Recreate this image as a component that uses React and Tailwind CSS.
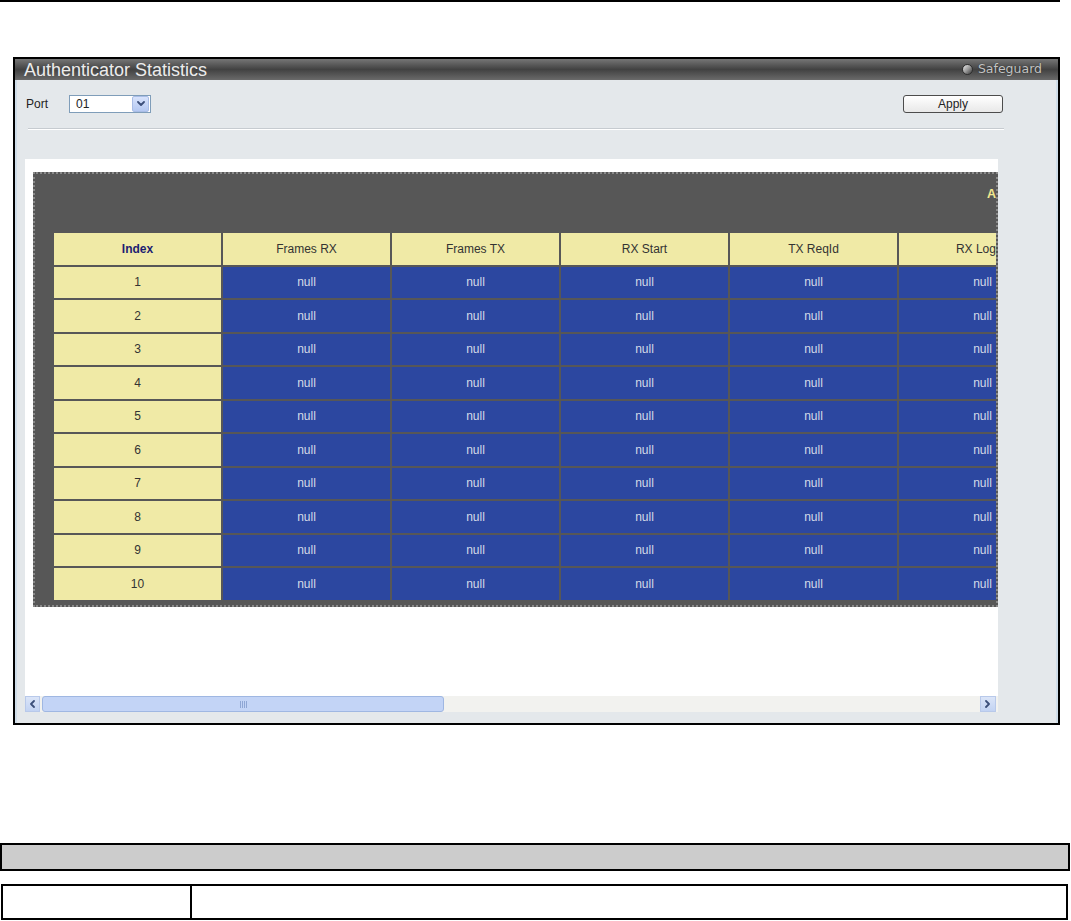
import React from "react";

const cols = ["Frames RX", "Frames TX", "RX Start", "TX ReqId", "RX Logoff"];
const rows = Array.from({ length: 10 }, (_, i) => i + 1);

function Chevron({ dir = "down", className = "" }) {
  const d = dir === "down" ? "M1 2 L4 5 L7 2" : dir === "left" ? "M5 1 L2 4 L5 7" : "M2 1 L5 4 L2 7";
  return (
    <svg width="8" height="8" viewBox="0 0 8 8" className={className}>
      <path d={d} fill="none" stroke="#3c4f7a" strokeWidth="1.8" strokeLinecap="round" strokeLinejoin="round" />
    </svg>
  );
}

export default function App() {
  return (
    <div className="relative w-[1071px] h-[921px] bg-white overflow-hidden" style={{ fontFamily: '"Liberation Sans", Arial, sans-serif' }}>
      <div className="h-[2px] w-[1060px] bg-black" />

      {/* Frame */}
      <div className="ml-[13px] mt-[55px] w-[1047px] h-[668px] border-2 border-black flex flex-col bg-[#e4e8eb]">
        {/* Title bar */}
        <div className="h-[21px] flex items-center justify-between bg-gradient-to-b from-[#767676] via-[#424242] to-[#6a6a6a]">
          <span className="pl-[9px] text-[18px] leading-none text-[#ececec]">Authenticator Statistics</span>
          <div className="flex items-center gap-[5px] pr-[16px]">
            <span className="w-[11px] h-[11px] rounded-full bg-gradient-to-br from-[#f0f0f0] via-[#9a9a9a] to-[#3a3a3a] border border-[#2e2e2e]" />
            <span className="text-[12.5px] leading-none text-[#c4c4c4]" style={{ fontFamily: '"DejaVu Sans", sans-serif', textShadow: "0 0 1px #222" }}>Safeguard</span>
          </div>
        </div>

        {/* Body */}
        <div className="flex-1 border-l-2 border-r-2 border-[#cfdde9] pl-[8px]">
          <div className="mt-[14px] w-[978px] h-[19px] flex items-center justify-between">
            <div className="flex items-center">
              <span className="ml-[1px] text-[12px] text-[#222]">Port</span>
              <div className="ml-[21px] w-[82px] h-[18px] border border-[#7f9db9] bg-white flex items-center justify-between">
                <span className="pl-[6px] text-[12px] text-[#222]">01</span>
                <span className="w-[17px] h-[16px] mr-[1px] bg-gradient-to-b from-[#d8e3fc] to-[#b4c8f2] border border-[#a9bde6] flex items-center justify-center rounded-[2px]">
                  <Chevron dir="down" />
                </span>
              </div>
            </div>
            <button className="w-[100px] h-[18px] border border-[#4c4c4c] rounded-[3px] bg-gradient-to-b from-white to-[#e8e8e8] text-[12px] text-[#222] leading-none">
              Apply
            </button>
          </div>

          <div className="mt-[15px] ml-[3px] w-[976px] h-[2px] border-t border-[#c6cbd0] border-b border-b-white" />

          {/* White content area */}
          <div className="mt-[29px] w-[973px] h-[553px] bg-white flex flex-col">
            <div className="ml-[8px] mt-[13px] w-[965px] h-[435px] bg-[#575757] border-2 border-dotted border-[#8a8a8a] overflow-hidden">
              <div className="h-[59px] pl-[952px] pt-[11px] whitespace-nowrap text-[12.5px] font-bold text-[#f2e88e]">
                Authenticator Statistics
              </div>
              <div className="ml-[19px] grid grid-cols-[repeat(6,167px)] gap-[2px] text-[12px]">
                <div className="h-[31.5px] bg-[#f0eaa6] flex items-center justify-center font-bold text-[#1e1e72]">Index</div>
                {cols.map((c) => (
                  <div key={c} className="h-[31.5px] bg-[#f0eaa6] flex items-center justify-center text-[#333] whitespace-nowrap">{c}</div>
                ))}
                {rows.map((r) => (
                  <React.Fragment key={r}>
                    <div className="h-[31.5px] bg-[#f0eaa6] flex items-center justify-center text-[#333]">{r}</div>
                    {cols.map((c) => (
                      <div key={c} className="h-[31.5px] bg-[#2c47a0] flex items-center justify-center text-[#d4dae8]">null</div>
                    ))}
                  </React.Fragment>
                ))}
              </div>
            </div>
            <div className="flex-1" />
            {/* Scrollbar */}
            <div className="h-[16px] flex items-stretch bg-[#f2f2ef]">
              <div className="w-[15px] bg-gradient-to-b from-[#dbe5f8] to-[#c2d3f3] border border-[#b8c9ea] flex items-center justify-center">
                <Chevron dir="left" />
              </div>
              <div className="ml-[2px] w-[402px] rounded-[3px] bg-[#c3d4f6] border border-[#9fb7e2] flex items-center justify-center gap-[1px]">
                <span className="w-[1px] h-[7px] bg-[#8ea6d4]" />
                <span className="w-[1px] h-[7px] bg-[#8ea6d4]" />
                <span className="w-[1px] h-[7px] bg-[#8ea6d4]" />
                <span className="w-[1px] h-[7px] bg-[#8ea6d4]" />
              </div>
              <div className="flex-1" />
              <div className="w-[16px] mr-[2px] bg-gradient-to-b from-[#dbe5f8] to-[#c2d3f3] border border-[#b8c9ea] flex items-center justify-center">
                <Chevron dir="right" />
              </div>
            </div>
          </div>
        </div>
      </div>

      {/* Lower table */}
      <div className="mt-[118px] w-[1070px] h-[28px] border-2 border-black bg-[#cccccc]" />
      <div className="mt-[13px] ml-[1px] w-[1067px] h-[36px] border-2 border-black flex">
        <div className="w-[189px] h-full border-r-2 border-black" />
        <div className="flex-1" />
      </div>
    </div>
  );
}
